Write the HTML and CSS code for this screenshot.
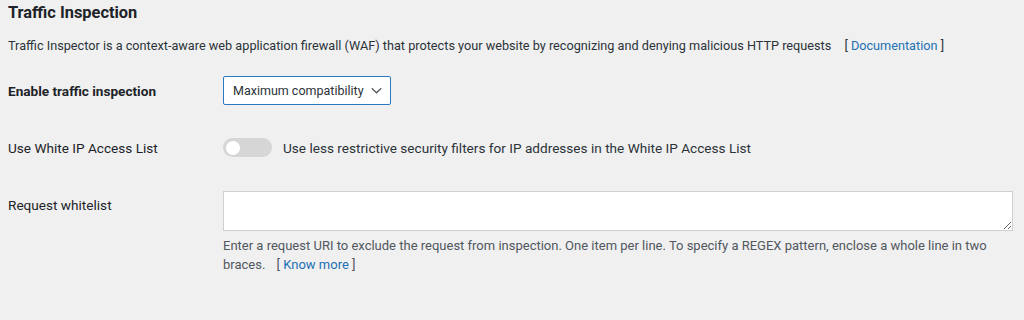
FILE: index.html
```html
<!DOCTYPE html>
<html lang="en">
<head>
    <meta charset="UTF-8">
    <title>Traffic Inspection</title>
    <link rel="stylesheet" href="styles.css">
</head>
<body>
    <div class="wrap">
        <h2 class="section-title">Traffic Inspection</h2>
        <p class="section-desc">Traffic Inspector is a context-aware web application firewall (WAF) that protects your website by recognizing and denying malicious HTTP requests <span class="doc-link">[ <a href="#">Documentation</a> ]</span></p>

        <div class="form-table">
            <div class="form-row row-select">
                <label class="row-label strong">Enable traffic inspection</label>
                <div class="row-field">
                    <div class="select-box">
                        <span>Maximum compatibility</span>
                        <svg width="11" height="7" viewBox="0 0 11 7"><path d="M0.8 1.2 L5.5 5.8 L10.2 1.2" fill="none" stroke="#50575e" stroke-width="1.2"/></svg>
                    </div>
                </div>
            </div>

            <div class="form-row row-toggle">
                <label class="row-label">Use White IP Access List</label>
                <div class="row-field toggle-field">
                    <span class="toggle"><span class="toggle-knob"></span></span>
                    <span class="toggle-text">Use less restrictive security filters for IP addresses in the White IP Access List</span>
                </div>
            </div>

            <div class="form-row row-textarea">
                <label class="row-label">Request whitelist</label>
                <div class="row-field">
                    <textarea class="big-text"></textarea>
                    <p class="help">Enter a request URI to exclude the request from inspection. One item per line. To specify a REGEX pattern, enclose a whole line in two braces. <span class="doc-link">[ <a href="#">Know more</a> ]</span></p>
                </div>
            </div>
        </div>
    </div>
</body>
</html>
```

FILE: styles.css
```css
body {
    margin: 0;
    background-color: #f0f0f1;
    font-family: Roboto, "Liberation Sans", sans-serif;
    color: #3c434a;
    font-size: 13px;
}
.wrap {
    padding: 0 8px;
}
.section-title {
    font-size: 16.4px;
    font-weight: 700;
    color: #1d2327;
    margin: 0;
    padding-top: 3px;
    line-height: 20px;
}
.section-desc {
    margin: 13px 0 0;
    line-height: 20px;
    font-size: 12.7px;
    color: #2c3338;
}
.section-desc .doc-link {
    margin-left: 10px;
}
.doc-link {
    margin-left: 8px;
}
.doc-link a {
    color: #2271b1;
    text-decoration: none;
}
.form-table {
    display: flex;
    flex-direction: column;
}
.form-row {
    display: grid;
    grid-template-columns: 215px 1fr;
    align-items: center;
}
.row-label {
    font-size: 13.6px;
    color: #1d2327;
}
.row-label.strong {
    font-weight: 700;
}
.row-select {
    margin-top: 20px;
}
.select-box {
    display: inline-flex;
    align-items: center;
    gap: 7px;
    box-sizing: border-box;
    height: 29px;
    padding: 0 8px 0 9px;
    background: #fff;
    border: 1px solid #2a78c0;
    border-radius: 2px;
    font-size: 12.5px;
    color: #2c3338;
}
.row-toggle {
    margin-top: 33px;
}
.toggle-field {
    display: flex;
    align-items: center;
    gap: 11px;
}
.toggle {
    display: inline-block;
    position: relative;
    width: 49px;
    height: 19px;
    border-radius: 10px;
    background: #d6d6d6;
}
.toggle-knob {
    position: absolute;
    top: 2.5px;
    left: 3px;
    width: 14px;
    height: 14px;
    border-radius: 50%;
    background: #fff;
}
.toggle-text {
    font-size: 13.6px;
    color: #2c3338;
}
.row-textarea {
    margin-top: 34px;
    align-items: start;
}
.row-textarea .row-label {
    padding-top: 6px;
}
.big-text {
    display: block;
    box-sizing: border-box;
    width: 790px;
    height: 40px;
    margin: 0;
    background: #fff;
    border: 1px solid #d0d0d0;
    border-radius: 0;
}
.help {
    margin: 5px 0 0;
    width: 790px;
    line-height: 19px;
    color: #50575e;
}
```
